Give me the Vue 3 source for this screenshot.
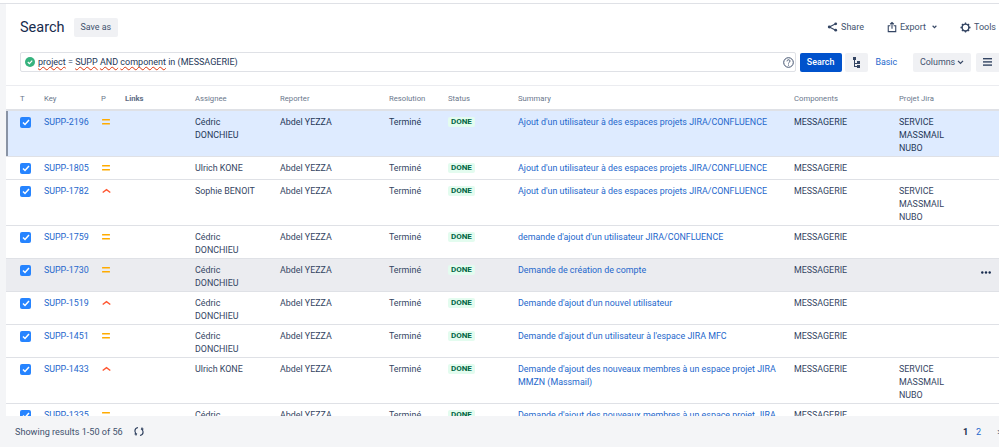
<script setup>
const equal = "medium";
const cedric = ["Cédric", "DONCHIEU"];
const projects = ["SERVICE", "MASSMAIL", "NUBO"];
const add = "Ajout d'un utilisateur à des espaces projets JIRA/CONFLUENCE";

const rows = [
  { key: "SUPP-2196", prio: equal, assignee: cedric, summary: add, projects, state: "selected" },
  { key: "SUPP-1805", prio: equal, assignee: ["Ulrich KONE"], summary: add, projects: [] },
  { key: "SUPP-1782", prio: "high", assignee: ["Sophie BENOIT"], summary: add, projects },
  { key: "SUPP-1759", prio: equal, assignee: cedric, summary: "demande d'ajout d'un utilisateur JIRA/CONFLUENCE", projects: [] },
  { key: "SUPP-1730", prio: equal, assignee: cedric, summary: "Demande de création de compte", projects: [], state: "hover" },
  { key: "SUPP-1519", prio: "high", assignee: cedric, summary: "Demande d'ajout d'un nouvel utilisateur", projects: [] },
  { key: "SUPP-1451", prio: equal, assignee: cedric, summary: "Demande d'ajout d'un utilisateur à l'espace JIRA MFC", projects: [] },
  { key: "SUPP-1433", prio: "high", assignee: ["Ulrich KONE"], summary: "Demande d'ajout des nouveaux membres à un espace projet JIRA MMZN (Massmail)", projects },
  { key: "SUPP-1335", prio: equal, assignee: cedric, summary: "Demande d'ajout des nouveaux membres à un espace projet JIRA MMZN (Massmail)", projects: [] },
];
</script>

<template>
  <div class="page">
    <div class="topline"></div>
    <div class="content">
      <div class="header">
        <div class="title-group">
          <h1>Search</h1>
          <button class="btn">Save as</button>
        </div>
        <div class="actions">
          <span class="action">
            <svg width="11" height="12" viewBox="0 0 12 12" fill="none" stroke="#344563" stroke-width="1.2">
              <path d="M9.5 2.500 2.500 6l7 3.500" />
              <circle cx="9.500" cy="2.500" r="1.500" fill="#344563" stroke="none" />
              <circle cx="2.500" cy="6" r="1.600" fill="#344563" stroke="none" />
              <circle cx="9.500" cy="9.500" r="1.500" fill="#344563" stroke="none" />
            </svg>
            Share
          </span>
          <span class="action export">
            <svg width="10" height="12" viewBox="0 0 12 13" fill="none" stroke="#344563" stroke-width="1.3">
              <path d="M4 5H1.500v7h9V5H8" />
              <path d="M6 8.500V1M3.800 3.200 6 1l2.200 2.200" />
            </svg>
            Export
            <svg width="5" height="4" viewBox="0 0 8 6" fill="none" stroke="#344563" stroke-width="1.800">
              <path d="m1 1 3 3 3-3" />
            </svg>
          </span>
          <span class="action">
            <svg width="11" height="11" viewBox="0 0 12 12" fill="none" stroke="#344563">
              <circle cx="6" cy="6" r="3.700" stroke-width="1.600" />
              <path d="M6 .5v2M6 9.500v2M.5 6h2M9.500 6h2M2.100 2.100l1.400 1.400M8.500 8.500l1.400 1.400M2.100 9.900l1.400-1.400M8.500 3.500l1.400-1.400" stroke-width="1.400" />
            </svg>
            Tools
          </span>
        </div>
      </div>

      <div class="query-bar">
        <div class="query">
          <svg class="ok" width="10" height="10" viewBox="0 0 10 10">
            <circle cx="5" cy="5" r="5" fill="#36b37e" />
            <path d="m2.800 5 1.600 1.600 2.800-3" fill="none" stroke="#fff" stroke-width="1.200" />
          </svg>
          <span class="jql"><u>project</u> = <u>SUPP</u> <u>AND</u> <u>component</u> in (MESSAGERIE)</span>
          <svg class="help" width="11" height="11" viewBox="0 0 11 11" fill="none" stroke="#42526e">
            <circle cx="5.500" cy="5.500" r="4.800" />
            <path d="M4 4.300c0-2 3-2 3-.2 0 1.200-1.500 1.100-1.500 2.400M5.500 7.600v1" />
          </svg>
        </div>
        <button class="btn primary">Search</button>
        <button class="btn icon">
          <svg width="9" height="11" viewBox="0 0 9 11" fill="#344563">
            <rect x="1" y="0" width="3" height="3" />
            <rect x="5" y="4" width="3" height="3" />
            <rect x="5" y="8" width="3" height="3" />
            <path d="M2 3h1v3h2v1H3v2h2v1H2z" />
          </svg>
        </button>
        <a class="basic">Basic</a>
        <button class="btn columns">
          Columns
          <svg width="7" height="5" viewBox="0 0 8 6" fill="none" stroke="#344563" stroke-width="1.500">
            <path d="m1 1 3 3 3-3" />
          </svg>
        </button>
        <button class="btn menu">
          <svg width="9" height="8" viewBox="0 0 9 8" fill="#344563">
            <rect width="9" height="1.400" />
            <rect y="3.200" width="9" height="1.400" />
            <rect y="6.400" width="9" height="1.400" />
          </svg>
        </button>
      </div>

      <div class="results">
        <table>
          <colgroup>
            <col style="width: 38px" />
            <col style="width: 57px" />
            <col style="width: 24px" />
            <col style="width: 70px" />
            <col style="width: 85px" />
            <col style="width: 109px" />
            <col style="width: 59px" />
            <col style="width: 70px" />
            <col style="width: 276px" />
            <col style="width: 105px" />
            <col style="width: 76px" />
            <col />
          </colgroup>
          <thead>
            <tr>
              <th class="first">T</th>
              <th>Key</th>
              <th>P</th>
              <th class="links">Links</th>
              <th>Assignee</th>
              <th>Reporter</th>
              <th>Resolution</th>
              <th>Status</th>
              <th>Summary</th>
              <th>Components</th>
              <th>Projet Jira</th>
              <th></th>
            </tr>
          </thead>
          <tbody>
            <tr v-for="row in rows" :key="row.key" :class="row.state">
              <td class="first">
                <span class="check">
                  <svg width="8" height="7" viewBox="0 0 8 7" fill="none" stroke="#fff" stroke-width="1.500">
                    <path d="m1 3.500 2 2 4-4.500" />
                  </svg>
                </span>
              </td>
              <td><a>{{ row.key }}</a></td>
              <td>
                <svg v-if="row.prio === 'medium'" class="prio" width="8" height="6" viewBox="0 0 8 6" fill="#ffab00">
                  <rect width="8" height="1.600" rx="0.500" />
                  <rect y="4" width="8" height="1.600" rx="0.500" />
                </svg>
                <svg v-else class="prio" width="9" height="6" viewBox="0 0 9 6" fill="none" stroke="#ff5630" stroke-width="1.400">
                  <path d="M.7 4.500 4.500 1.600l3.800 2.900" />
                </svg>
              </td>
              <td></td>
              <td><div v-for="line in row.assignee" :key="line">{{ line }}</div></td>
              <td>Abdel YEZZA</td>
              <td>Terminé</td>
              <td><span class="lozenge">DONE</span></td>
              <td class="summary"><a>{{ row.summary }}</a></td>
              <td>MESSAGERIE</td>
              <td><div v-for="line in row.projects" :key="line">{{ line }}</div></td>
              <td class="more">
                <svg v-if="row.state === 'hover'" width="10" height="3" viewBox="0 0 10 3" fill="#172b4d">
                  <circle cx="1.300" cy="1.500" r="1.200" />
                  <circle cx="5" cy="1.500" r="1.200" />
                  <circle cx="8.700" cy="1.500" r="1.200" />
                </svg>
              </td>
            </tr>
          </tbody>
        </table>
      </div>
    </div>

    <div class="footer">
      <div class="count">
        Showing results 1-50 of 56
        <svg width="10" height="11" viewBox="0 0 10 11" fill="none" stroke="#344563" stroke-width="1.200">
          <path d="M4 1.500C1.500 2 .8 4 1 5.500c.2 1.300 1 2.300 2 2.800M2 9.500V8H.5M6 9.500c2.500-.5 3.200-2.500 3-4-.2-1.300-1-2.300-2-2.800M8 1.500V3h1.500" />
        </svg>
      </div>
      <div class="pages">
        <b>1</b>
        <a>2</a>
        <span class="next">&gt;</span>
      </div>
    </div>
  </div>
</template>

<style scoped>
.page {
  height: 447px;
  display: flex;
  flex-direction: column;
  overflow: hidden;
  background: #f4f5f7;
  font-family: Roboto, "Noto Sans", sans-serif;
  font-size: 8.9px;
  color: #172b4d;
}

.topline {
  height: 4px;
  flex: none;
  background: #fff;
  border-bottom: 1px solid #dfe1e6;
  box-sizing: border-box;
}

.content {
  flex: 1;
  min-height: 0;
  margin-left: 6px;
  background: #fff;
  display: flex;
  flex-direction: column;
}

.header {
  display: flex;
  justify-content: space-between;
  align-items: center;
  height: 40px;
  margin-top: 3px;
  padding-left: 14px;
  flex: none;
}

.title-group {
  display: flex;
  align-items: center;
  gap: 9px;
}

h1 {
  margin: 0;
  font-size: 14.5px;
  font-weight: 400;
  color: #172b4d;
}

.btn {
  border: 0;
  border-radius: 2px;
  background: #f0f1f4;
  color: #42526e;
  font: inherit;
  height: 19px;
  padding: 0 7px;
  display: flex;
  align-items: center;
  justify-content: center;
}

.actions {
  display: flex;
  gap: 23px;
  padding-right: 3px;
  font-size: 9px;
}

.action {
  display: flex;
  align-items: center;
  gap: 3px;
  color: #42526e;
}

.export svg:last-child {
  margin-left: 3px;
}

.query-bar {
  display: flex;
  align-items: center;
  height: 20px;
  margin-top: 5px;
  padding-left: 14px;
  flex: none;
}

.query {
  width: 779px;
  height: 20px;
  box-sizing: border-box;
  border: 1px solid #dfe1e6;
  border-radius: 2px;
  display: flex;
  align-items: center;
  padding: 0 1px 0 4px;
  gap: 3px;
}

.ok {
  flex: none;
}

.jql {
  flex: 1;
  color: #253858;
  font-size: 9px;
}

.jql u {
  text-decoration: underline wavy #de350b 0.7px;
  text-decoration-skip-ink: none;
  text-underline-offset: 1px;
}

.primary {
  margin-left: 4px;
  width: 42px;
  padding: 0;
  background: #0052cc;
  color: #fff;
  font-weight: 500;
}

.icon {
  margin-left: 3px;
  width: 24px;
  padding: 0;
}

.basic {
  margin-left: 7px;
  width: 38px;
  color: #2467cc;
}

.columns {
  width: 58px;
  padding: 0;
  gap: 2px;
}

.menu {
  margin-left: 5px;
  flex: 1;
  border-radius: 2px 0 0 2px;
}

.results {
  flex: 1;
  min-height: 0;
  overflow: hidden;
  margin-top: 13px;
  border-top: 1px solid #ebecf0;
}

table {
  width: 993px;
  table-layout: fixed;
  border-collapse: collapse;
}

th {
  height: 21px;
  padding: 2px 0 0;
  text-align: left;
  font-size: 7.7px;
  font-weight: 400;
  color: #6b778c;
  border-bottom: 2px solid #dfe1e6;
}

th.links {
  font-weight: 700;
  color: #5e6c84;
}

td {
  padding: 5px 0 1px;
  line-height: 13px;
  vertical-align: top;
  color: #344563;
  border-bottom: 1px solid #dfe1e6;
}

.first {
  padding-left: 14px;
}

tr.selected td {
  background: #deebff;
  color: #253858;
}

tr.selected td.first {
  box-shadow: inset 2px 0 0 #8993a4;
}

tr.hover td {
  background: #ebecf0;
}

a {
  color: #2467cc;
}

.check {
  width: 11px;
  height: 11px;
  border-radius: 2px;
  background: #2684ff;
  display: flex;
  align-items: center;
  justify-content: center;
  margin: 1px 0 4px;
}

.prio {
  display: block;
  margin: 3px 0 0 1px;
}

.lozenge {
  display: inline-block;
  padding: 0 3px;
  line-height: 10px;
  font-size: 8px;
  font-weight: 700;
  color: #006644;
  background: #e3fcef;
  border-radius: 2px;
  vertical-align: 1px;
}

.summary {
  padding-right: 8px;
}

.more {
  padding-top: 12px;
  padding-left: 6px;
}

.more svg {
  display: block;
}

.footer {
  flex: none;
  height: 31px;
  display: flex;
  justify-content: space-between;
  align-items: center;
  padding-left: 15px;
  color: #42526e;
  font-size: 9.1px;
}

.count {
  display: flex;
  align-items: center;
  gap: 11px;
}

.pages {
  display: flex;
  gap: 8px;
  margin-right: -3px;
}

.pages b {
  color: #172b4d;
}

.next {
  margin-left: 8px;
}
</style>

<style>
body {
  background: #fff;
}
</style>
